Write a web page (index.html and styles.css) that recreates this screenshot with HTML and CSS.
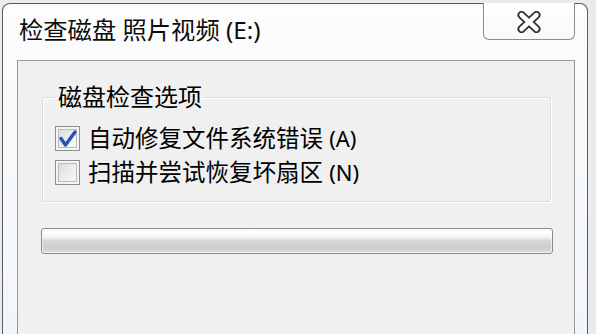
FILE: index.html
```html
<!DOCTYPE html>
<html lang="zh-CN">
<head>
<meta charset="utf-8">
<title>检查磁盘</title>
<link rel="stylesheet" href="styles.css">
</head>
<body>
<div class="window">
  <div class="titlebar"><span class="title">检查磁盘 照片视频 (E:)</span></div>
  <div class="close">
    <svg width="24" height="22" viewBox="0 0 24 22">
      <path d="M4.5 4 L19.5 18 M19.5 4 L4.5 18" stroke="#2e2e2e" stroke-width="8" stroke-linecap="round" fill="none"/>
      <path d="M4.5 4 L19.5 18 M19.5 4 L4.5 18" stroke="#ffffff" stroke-width="4.5" stroke-linecap="round" fill="none"/>
    </svg>
  </div>
  <div class="panel">
    <fieldset class="group">
      <legend class="legend">磁盘检查选项</legend>
      <div class="row">
        <span class="box checked">
          <svg width="25" height="25" viewBox="0 0 25 25">
            <path d="M6 12.5 L10.5 19 L20 6" stroke="#2a52b4" stroke-width="3.4" stroke-linecap="round" stroke-linejoin="round" fill="none"/>
          </svg>
        </span>
        <span class="label">自动修复文件系统错误 <span class="key">(A)</span></span>
      </div>
      <div class="row">
        <span class="box"></span>
        <span class="label">扫描并尝试恢复坏扇区 <span class="key">(N)</span></span>
      </div>
    </fieldset>
    <div class="progress"></div>
  </div>
</div>
</body>
</html>
```

FILE: styles.css
```css
html, body {
  margin: 0;
  padding: 0;
}
body {
  width: 596px;
  height: 334px;
  overflow: hidden;
  background: #ebebeb;
  font-family: "Noto Sans", "Noto Sans CJK SC", sans-serif;
  color: #000;
}
.window {
  position: relative;
  box-sizing: border-box;
  margin: 3px 0 0 2px;
  width: 586px;
  height: 331px;
  border: 1px solid #5c5c5c;
  border-bottom: none;
  border-radius: 8px 8px 0 0;
  padding: 0 12px 0 14px;
  background: linear-gradient(to bottom, #fdfdfd 0%, #f7f9fb 30%, #f3f6f9 100%);
}
.titlebar {
  box-sizing: border-box;
  height: 56px;
  display: flex;
  align-items: center;
  padding: 0 0 4px 2px;
}
.title {
  font-size: 24.3px;
  line-height: 28px;
  color: #0c0c0c;
  text-shadow: 0 0 6px #ffffff, 0 0 3px #ffffff;
}
.close {
  position: absolute;
  top: -1px;
  right: 12px;
  box-sizing: border-box;
  width: 92px;
  height: 37px;
  border: 1px solid #8a8a8a;
  border-top: none;
  border-radius: 0 0 6px 6px;
  background: linear-gradient(to bottom, #ffffff 0%, #f8f9fa 100%);
  display: flex;
  align-items: center;
  justify-content: center;
  padding-top: 1px;
}
.panel {
  box-sizing: border-box;
  height: 274px;
  border: 1px solid #979797;
  border-bottom: none;
  background: #f0f0f0;
  display: flow-root;
}
.group {
  margin: 22px 23px 0 24px;
  padding: 10px 12px 12px 12px;
  border: 1px solid #d5dbe0;
  border-radius: 3px;
  box-shadow: inset 1px 1px 0 #ffffff, 1px 1px 0 #ffffff;
  min-inline-size: 0;
}
.legend {
  margin-left: 1px;
  padding: 0 3px 0 2px;
  font-size: 24px;
  line-height: 28px;
}
.row {
  height: 34px;
  display: flex;
  align-items: center;
  gap: 8px;
}
.box {
  box-sizing: border-box;
  width: 25px;
  height: 25px;
  flex: none;
  border: 1px solid #8d8f91;
  position: relative;
  box-shadow: inset 0 0 0 2px #f4f4f4, inset 0 0 0 3px #b9bdc1;
  background-image: linear-gradient(135deg, #cfd0d2 0%, #e9eaeb 45%, #fbfbfb 100%);
  background-color: #ffffff;
  background-origin: border-box;
  background-clip: content-box;
  padding: 3px;
}
.box.checked {
  padding: 0;
  background: linear-gradient(135deg, #d4d6da 0%, #eef0f3 55%, #fcfcfd 100%);
}
.box svg {
  position: absolute;
  left: -1px;
  top: -1px;
}
.label {
  font-size: 23.5px;
  line-height: 30px;
  white-space: nowrap;
}
.key {
  font-size: 22px;
}
.progress {
  box-sizing: border-box;
  margin: 26px 21px 0 23px;
  height: 26px;
  border: 1px solid #8a8a8a;
  border-radius: 3px;
  background: linear-gradient(to bottom, #f4f4f4 0%, #ffffff 15%, #f2f2f2 35%, #d6d6d6 50%, #cdcdcd 75%, #d7d7d7 92%, #e6e6e6 100%);
  box-shadow: inset 0 0 0 1px rgba(255,255,255,0.6);
}
```
